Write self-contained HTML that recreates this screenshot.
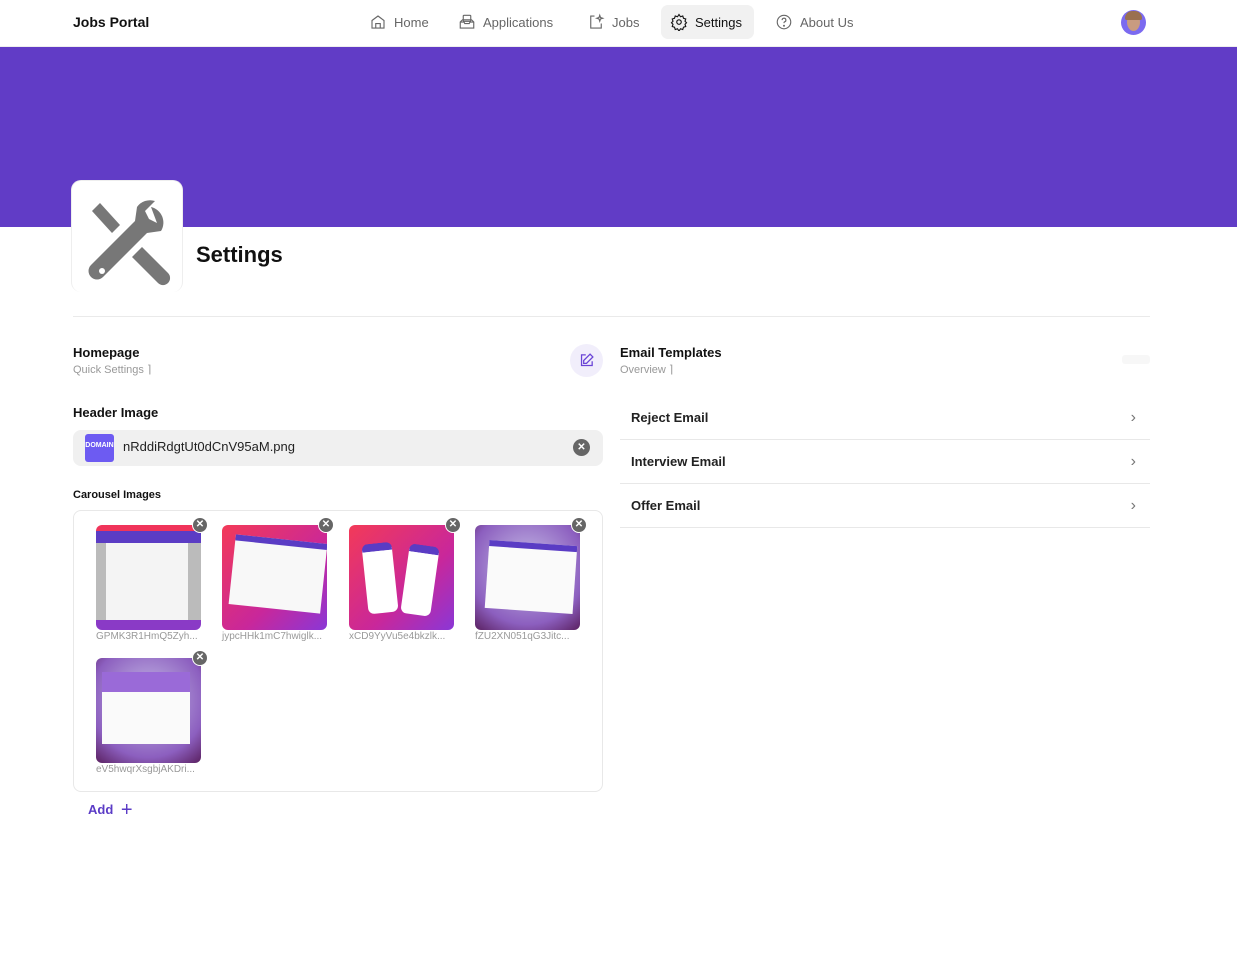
<!DOCTYPE html>
<html><head><meta charset="utf-8"><style>
*{box-sizing:border-box;margin:0;padding:0}
body{width:1237px;height:956px;background:#fff;font-family:"Liberation Sans",sans-serif;color:#111;position:relative;overflow:hidden}
.abs{position:absolute}
.nav{position:absolute;top:0;left:0;width:1237px;height:47px;background:#fff;border-bottom:1px solid #eee}
.ni{position:absolute;top:5px;height:34px;display:flex;align-items:center;gap:7px;font-size:13px;color:#666;padding:0 9px;border-radius:7px}
.ni svg{width:18px;height:18px;fill:none;stroke:#666;stroke-width:1.5}
.banner{position:absolute;top:47px;left:0;width:1237px;height:180px;background:#613cc6}
.thumb{position:absolute;width:105px;height:105px;border-radius:6px;overflow:hidden}
.cap{position:absolute;font-size:10px;color:#999;width:108px;white-space:nowrap}
.x{position:absolute;width:16px;height:16px;border-radius:50%;background:#666;border:1.5px solid #fff;color:#fff;font-size:10px;line-height:13px;text-align:center;font-weight:bold}
.row{position:absolute;left:620px;width:530px;height:44px;border-bottom:1px solid #e8e8e8;font-size:13px;font-weight:bold;color:#222;padding-left:11px;display:flex;align-items:center}
.row span{position:absolute;right:14px;color:#777;font-weight:normal;font-size:16px}
</style></head><body>
<div class="nav">
<div class="abs" style="left:73px;top:14px;font-size:14px;font-weight:bold">Jobs Portal</div>
<div class="ni" style="left:360px"><svg viewBox="0 0 24 24"><path d="M4 10l8-6 8 6v10H4z"/><path d="M9 20v-6h6v6"/></svg>Home</div>
<div class="ni" style="left:449px"><svg viewBox="0 0 24 24"><path d="M3 12l3-3h12l3 3v8H3z"/><path d="M3 12h5l1 2h6l1-2h5"/><rect x="7" y="3" width="10" height="8" rx="1"/></svg>Applications</div>
<div class="ni" style="left:578px"><svg viewBox="0 0 24 24"><path d="M10 4H5v16h14v-6"/><path d="M17 3l1 3 3 1-3 1-1 3-1-3-3-1 3-1z"/></svg>Jobs</div>
<div class="ni" style="left:661px;background:#f1f1f1;color:#111;width:93px"><svg viewBox="0 0 24 24" style="stroke:#111"><circle cx="12" cy="12" r="3"/><path d="M12 2l2 3 3-1 1 3 3 1-1 3 2 2-2 2 1 3-3 1-1 3-3-1-2 3-2-3-3 1-1-3-3-1 1-3-2-2 2-2-1-3 3-1 1-3 3 1z"/></svg>Settings</div>
<div class="ni" style="left:766px"><svg viewBox="0 0 24 24"><circle cx="12" cy="12" r="9"/><path d="M9.5 9.5a2.5 2.5 0 1 1 3 2.4c-.5.2-.5.6-.5 1.6"/><circle cx="12" cy="17" r=".6"/></svg>About Us</div>
<div class="abs" style="left:1121px;top:10px;width:25px;height:25px;border-radius:50%;background:#7b6af0;overflow:hidden"><div style="position:absolute;left:6px;top:3px;width:13px;height:18px;border-radius:50%;background:#c99b80"></div><div style="position:absolute;left:4px;top:1px;width:17px;height:9px;border-radius:8px 8px 2px 2px;background:#9a7050"></div></div>
</div>
<div class="banner"></div>
<div class="abs" style="left:71px;top:180px;width:112px;height:112px;background:#fff;border-radius:10px;border:1px solid #eee;border-bottom:none">
<svg viewBox="0 0 112 112" width="112" height="112"><g fill="#777"><path d="M20 30l8-8 20 22-8 8z"/><path d="M79 26a16 16 0 0 1 10 24l-14 2-44 44a8 8 0 0 1-12-12l44-44 2-14a16 16 0 0 1 18-6l-10 10 4 8 8 4z"/><path d="M70 66l26 26a7 7 0 0 1-10 10L60 76z"/></g><circle cx="30" cy="90" r="3" fill="#fff"/></svg></div>
<div class="abs" style="left:196px;top:242px;font-size:22px;font-weight:bold">Settings</div>
<div class="abs" style="left:73px;top:316px;width:1077px;height:1px;background:#eaeaea"></div>
<div class="abs" style="left:73px;top:345px;font-size:13px;font-weight:bold">Homepage</div>
<div class="abs" style="left:73px;top:363px;font-size:11px;color:#999">Quick Settings ⌉</div>
<div class="abs" style="left:570px;top:344px;width:33px;height:33px;border-radius:50%;background:#f1eefb"><svg viewBox="0 0 24 24" width="17" height="17" style="margin:8px" fill="none" stroke="#6a45d6" stroke-width="1.8"><path d="M11 4H5v15h15v-6"/><path d="M17 3l4 4-9 9H8v-4z"/></svg></div>
<div class="abs" style="left:73px;top:405px;font-size:13px;font-weight:bold">Header Image</div>
<div class="abs" style="left:73px;top:430px;width:530px;height:36px;background:#f0f0f0;border-radius:8px"></div>
<div class="abs" style="left:85px;top:434px;width:29px;height:28px;background:#6d5bf2;border-radius:3px;color:#fff;font-size:7px;font-weight:bold;line-height:24px;text-align:center">DOMAIN</div>
<div class="abs" style="left:123px;top:439px;font-size:13px;color:#222">nRddiRdgtUt0dCnV95aM.png</div>
<div class="x" style="left:573px;top:439px;width:17px;height:17px;border:none;background:#666;line-height:17px">✕</div>
<div class="abs" style="left:73px;top:489px;font-size:11px;font-weight:bold">Carousel Images</div>
<div class="abs" style="left:73px;top:510px;width:530px;height:282px;border:1px solid #e8e8e8;border-radius:8px"></div>
<div class="thumb" style="left:96px;top:525px;background:linear-gradient(#f0345a 0,#f0345a 6px,#5b3cc4 6px,#5b3cc4 18px,#bbb 18px,#bbb 95px,#8a3ac6 95px)"><div style="position:absolute;left:10px;top:18px;width:82px;height:77px;background:#f4f4f4"></div></div>
<div class="thumb" style="left:222px;top:525px;background:linear-gradient(135deg,#f33a58,#c9279a 60%,#8a37d6)"><div style="position:absolute;left:10px;top:14px;width:92px;height:70px;background:#f8f8f8;transform:rotate(6deg);border-top:6px solid #5a3cc4"></div></div>
<div class="thumb" style="left:349px;top:525px;background:linear-gradient(135deg,#f33a58,#c9279a 60%,#8a37d6)"><div style="position:absolute;left:16px;top:18px;width:30px;height:70px;background:#fff;border-radius:6px;border-top:8px solid #5a3cc4;transform:rotate(-6deg)"></div><div style="position:absolute;left:56px;top:20px;width:30px;height:70px;background:#fff;border-radius:6px;border-top:8px solid #5a3cc4;transform:rotate(8deg)"></div></div>
<div class="thumb" style="left:475px;top:525px;background:radial-gradient(circle at 50% 40%,#c8c0e8,#8c5fbf 70%,#5a2060)"><div style="position:absolute;left:12px;top:18px;width:88px;height:68px;background:#fafafa;border-top:6px solid #5a3cc4;transform:rotate(4deg)"></div></div>
<div class="thumb" style="left:96px;top:658px;background:radial-gradient(circle at 50% 40%,#c8c0e8,#8c5fbf 70%,#5a2060)"><div style="position:absolute;left:6px;top:14px;width:88px;height:72px;background:#fafafa;border-top:20px solid #9a6ad8"></div></div>
<div class="cap" style="left:96px;top:631px">GPMK3R1HmQ5Zyh...</div>
<div class="cap" style="left:222px;top:631px">jypcHHk1mC7hwiglk...</div>
<div class="cap" style="left:349px;top:631px">xCD9YyVu5e4bkzlk...</div>
<div class="cap" style="left:475px;top:631px">fZU2XN051qG3Jitc...</div>
<div class="cap" style="left:96px;top:764px">eV5hwqrXsgbjAKDri...</div>
<div class="x" style="left:192px;top:517px">✕</div>
<div class="x" style="left:318px;top:517px">✕</div>
<div class="x" style="left:445px;top:517px">✕</div>
<div class="x" style="left:571px;top:517px">✕</div>
<div class="x" style="left:192px;top:650px">✕</div>
<div class="abs" style="left:88px;top:797px;font-size:13px;font-weight:bold;color:#5b3cc6">Add <span style="font-size:20px;font-weight:normal;position:relative;top:2px;margin-left:4px">+</span></div>
<div class="abs" style="left:620px;top:345px;font-size:13px;font-weight:bold">Email Templates</div>
<div class="abs" style="left:620px;top:363px;font-size:11px;color:#999">Overview ⌉</div>
<div class="abs" style="left:1122px;top:355px;width:28px;height:9px;background:#f7f7f7;border-radius:3px"></div>
<div class="row" style="top:396px">Reject Email<span>›</span></div>
<div class="row" style="top:440px">Interview Email<span>›</span></div>
<div class="row" style="top:484px">Offer Email<span>›</span></div>
</body></html>
